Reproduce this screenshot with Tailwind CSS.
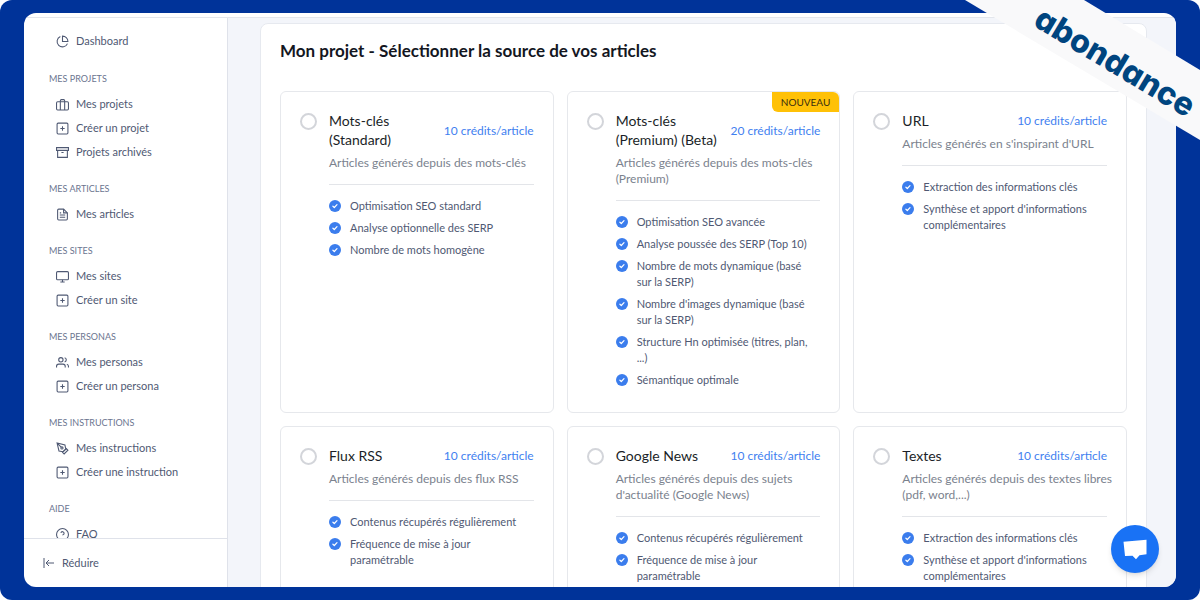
<!DOCTYPE html>
<html lang="fr">
<head>
<meta charset="utf-8">
<meta name="viewport" content="width=device-width, initial-scale=1">
<title>Mon projet - Sélectionner la source de vos articles</title>
<script src="https://cdn.jsdelivr.net/npm/@tailwindcss/browser@4"></script>
</head>
<body class="bg-white font-['Lato','Open_Sans',sans-serif] text-[11px] leading-4 text-[#4f5973]">
<svg class="hidden" aria-hidden="true">
  <symbol id="pie" viewBox="0 0 24 24"><path d="M21.2 15.9A10 10 0 1 1 8 2.8"/><path d="M22 12A10 10 0 0 0 12 2v10z"/></symbol>
  <symbol id="case" viewBox="0 0 24 24"><rect x="1" y="7" width="22" height="15" rx="2"/><path d="M16 22V5a2 2 0 0 0-2-2h-4a2 2 0 0 0-2 2v17"/></symbol>
  <symbol id="plus" viewBox="0 0 24 24"><rect x="2" y="2" width="20" height="20" rx="2"/><path d="M12 8v8M8 12h8"/></symbol>
  <symbol id="archive" viewBox="0 0 24 24"><path d="M21 8v13H3V8"/><path d="M1 3h22v5H1zM10 12h4"/></symbol>
  <symbol id="file" viewBox="0 0 24 24"><path d="M14 2H5a2 2 0 0 0-2 2v16a2 2 0 0 0 2 2h14a2 2 0 0 0 2-2V9z"/><path d="M14 2v7h7M17 13H7M17 17H7M9.500 9H7"/></symbol>
  <symbol id="monitor" viewBox="0 0 24 24"><rect x="1" y="3" width="22" height="15" rx="2"/><path d="M8 22h8M12 18v4"/></symbol>
  <symbol id="users" viewBox="0 0 24 24"><path d="M17 21v-2a4 4 0 0 0-4-4H5a4 4 0 0 0-4 4v2"/><circle cx="9" cy="7" r="4"/><path d="M23 21v-2a4 4 0 0 0-3-3.870M16 3.130a4 4 0 0 1 0 7.750"/></symbol>
  <symbol id="pen" viewBox="0 0 24 24"><path d="M12 19l7-7 3 3-7 7-3-3z"/><path d="M18 13l-1.500-7.500L2 2l3.500 14.500L13 18l5-5zM2 2l7.600 7.600"/><circle cx="11" cy="11" r="2"/></symbol>
  <symbol id="help" viewBox="0 0 24 24"><circle cx="12" cy="12" r="11"/><path d="M9 9a3 3 0 0 1 5.900 1c0 2-3 3-3 3M12 17h.01"/></symbol>
  <symbol id="collapse" viewBox="0 0 24 24"><path d="M2 2v20M22 12H7M12 6l-6 6 6 6"/></symbol>
  <symbol id="check" viewBox="0 0 12 12"><circle cx="6" cy="6" r="6" fill="#3b7ded"/><path d="M3.900 6.200l1.400 1.300 2.700-2.900" fill="none" stroke="#fff" stroke-width="1.200" stroke-linecap="round" stroke-linejoin="round"/></symbol>
</svg>

<div class="relative h-screen overflow-hidden rounded-xl bg-[#003399] px-6 py-[13px]">
  <div class="flex h-full flex-col overflow-hidden rounded-xl bg-white">
    <header class="h-[5px] shrink-0 border-b border-[#e3e6ec]"></header>
    <div class="flex min-h-0 grow">

      <aside class="flex w-[204px] shrink-0 flex-col border-r border-[#dfe2ea]">
        <nav class="min-h-0 grow overflow-hidden px-[25px] pt-[11px] [&_a]:flex [&_a]:h-6 [&_a]:items-center [&_a]:gap-[7px] [&_a]:pl-[7px] [&_a:first-child]:mb-[18px] [&_svg]:size-[13px] [&_svg]:shrink-0 [&_svg]:fill-none [&_svg]:stroke-current [&_svg]:stroke-2 [&_h2]:mt-[17px] [&_h2]:mb-[5px] [&_h2]:text-[9px] [&_h2]:leading-4 [&_h2]:text-[#6b7590]">
          <a href="#"><svg><use href="#pie"/></svg>Dashboard</a>
          <h2>MES PROJETS</h2>
          <a href="#"><svg><use href="#case"/></svg>Mes projets</a>
          <a href="#"><svg><use href="#plus"/></svg>Créer un projet</a>
          <a href="#"><svg><use href="#archive"/></svg>Projets archivés</a>
          <h2>MES ARTICLES</h2>
          <a href="#"><svg><use href="#file"/></svg>Mes articles</a>
          <h2>MES SITES</h2>
          <a href="#"><svg><use href="#monitor"/></svg>Mes sites</a>
          <a href="#"><svg><use href="#plus"/></svg>Créer un site</a>
          <h2>MES PERSONAS</h2>
          <a href="#"><svg><use href="#users"/></svg>Mes personas</a>
          <a href="#"><svg><use href="#plus"/></svg>Créer un persona</a>
          <h2>MES INSTRUCTIONS</h2>
          <a href="#"><svg><use href="#pen"/></svg>Mes instructions</a>
          <a href="#"><svg><use href="#plus"/></svg>Créer une instruction</a>
          <h2>AIDE</h2>
          <a href="#"><svg><use href="#help"/></svg>FAQ</a>
        </nav>
        <button type="button" class="flex h-[49px] shrink-0 items-center gap-[7px] border-t border-[#dfe2ea] px-[19px]"><svg class="size-3 fill-none stroke-current stroke-2"><use href="#collapse"/></svg>Réduire</button>
      </aside>

      <main class="min-w-0 grow overflow-hidden bg-[#f3f5fa] pt-[5px] pr-[29px] pl-8">
        <section class="rounded-lg border border-[#e6e9ef] bg-white px-[19px] pt-[15px] pb-5">
          <h1 class="mb-7 text-[17px] leading-6 font-bold text-[#14171f]">Mon projet - Sélectionner la source de vos articles</h1>
          <div class="grid grid-cols-3 gap-[13px] [&_li]:flex [&_li]:gap-[9px] [&_li_svg]:mt-[2px] [&_li_svg]:size-3 [&_li_svg]:shrink-0 [&_hr]:my-[13px] [&_hr]:border-[#e3e5e9] [&_ul]:space-y-[6px]">

            <label class="relative flex items-start gap-3 rounded-md border border-[#e6e8ec] px-[19px] pt-[19px] pb-6">
              <input type="radio" name="source" class="mt-[2px] size-[17px] shrink-0 appearance-none rounded-full border-2 border-[#d3d5da]">
              <div class="min-w-0 grow">
                <div class="flex items-center justify-between gap-2 leading-[19px]"><h3 class="text-[14px] text-[#1b1f28]">Mots-clés<br>(Standard)</h3><span class="shrink-0 text-[12px] text-[#3f7ff0]">10 crédits/article</span></div>
                <p class="mt-[6px] text-[12px] whitespace-nowrap text-[#7b828e]">Articles générés depuis des mots-clés</p>
                <hr>
                <ul>
                  <li><svg><use href="#check"/></svg>Optimisation SEO standard</li>
                  <li><svg><use href="#check"/></svg>Analyse optionnelle des SERP</li>
                  <li><svg><use href="#check"/></svg>Nombre de mots homogène</li>
                </ul>
              </div>
            </label>

            <label class="relative flex items-start gap-3 rounded-md border border-[#e6e8ec] px-[19px] pt-[19px] pb-6">
              <span class="absolute top-0 right-0 rounded-tr-md rounded-bl-md bg-[#ffc107] px-[9px] text-[10px] leading-5 text-[#3a2e10]">NOUVEAU</span>
              <input type="radio" name="source" class="mt-[2px] size-[17px] shrink-0 appearance-none rounded-full border-2 border-[#d3d5da]">
              <div class="min-w-0 grow">
                <div class="flex items-center justify-between gap-2 leading-[19px]"><h3 class="text-[14px] text-[#1b1f28]">Mots-clés<br>(Premium) (Beta)</h3><span class="shrink-0 text-[12px] text-[#3f7ff0]">20 crédits/article</span></div>
                <p class="mt-[6px] text-[12px] whitespace-nowrap text-[#7b828e]">Articles générés depuis des mots-clés<br>(Premium)</p>
                <hr>
                <ul>
                  <li><svg><use href="#check"/></svg>Optimisation SEO avancée</li>
                  <li><svg><use href="#check"/></svg>Analyse poussée des SERP (Top 10)</li>
                  <li><svg><use href="#check"/></svg><span>Nombre de mots dynamique (basé<br>sur la SERP)</span></li>
                  <li><svg><use href="#check"/></svg><span>Nombre d'images dynamique (basé<br>sur la SERP)</span></li>
                  <li><svg><use href="#check"/></svg><span>Structure Hn optimisée (titres, plan,<br>...)</span></li>
                  <li><svg><use href="#check"/></svg>Sémantique optimale</li>
                </ul>
              </div>
            </label>

            <label class="relative flex items-start gap-3 rounded-md border border-[#e6e8ec] px-[19px] pt-[19px] pb-6">
              <input type="radio" name="source" class="mt-[2px] size-[17px] shrink-0 appearance-none rounded-full border-2 border-[#d3d5da]">
              <div class="min-w-0 grow">
                <div class="flex items-center justify-between gap-2 leading-[19px]"><h3 class="text-[14px] text-[#1b1f28]">URL</h3><span class="shrink-0 text-[12px] text-[#3f7ff0]">10 crédits/article</span></div>
                <p class="mt-[6px] text-[12px] whitespace-nowrap text-[#7b828e]">Articles générés en s'inspirant d'URL</p>
                <hr>
                <ul>
                  <li><svg><use href="#check"/></svg>Extraction des informations clés</li>
                  <li><svg><use href="#check"/></svg><span>Synthèse et apport d'informations<br>complémentaires</span></li>
                </ul>
              </div>
            </label>

            <label class="relative flex items-start gap-3 rounded-md border border-[#e6e8ec] px-[19px] pt-[19px] pb-6">
              <input type="radio" name="source" class="mt-[2px] size-[17px] shrink-0 appearance-none rounded-full border-2 border-[#d3d5da]">
              <div class="min-w-0 grow">
                <div class="flex items-center justify-between gap-2 leading-[19px]"><h3 class="text-[14px] text-[#1b1f28]">Flux RSS</h3><span class="shrink-0 text-[12px] text-[#3f7ff0]">10 crédits/article</span></div>
                <p class="mt-[6px] text-[12px] whitespace-nowrap text-[#7b828e]">Articles générés depuis des flux RSS</p>
                <hr>
                <ul>
                  <li><svg><use href="#check"/></svg>Contenus récupérés régulièrement</li>
                  <li><svg><use href="#check"/></svg><span>Fréquence de mise à jour<br>paramétrable</span></li>
                </ul>
              </div>
            </label>

            <label class="relative flex items-start gap-3 rounded-md border border-[#e6e8ec] px-[19px] pt-[19px] pb-6">
              <input type="radio" name="source" class="mt-[2px] size-[17px] shrink-0 appearance-none rounded-full border-2 border-[#d3d5da]">
              <div class="min-w-0 grow">
                <div class="flex items-center justify-between gap-2 leading-[19px]"><h3 class="text-[14px] text-[#1b1f28]">Google News</h3><span class="shrink-0 text-[12px] text-[#3f7ff0]">10 crédits/article</span></div>
                <p class="mt-[6px] text-[12px] whitespace-nowrap text-[#7b828e]">Articles générés depuis des sujets<br>d'actualité (Google News)</p>
                <hr>
                <ul>
                  <li><svg><use href="#check"/></svg>Contenus récupérés régulièrement</li>
                  <li><svg><use href="#check"/></svg><span>Fréquence de mise à jour<br>paramétrable</span></li>
                </ul>
              </div>
            </label>

            <label class="relative flex items-start gap-3 rounded-md border border-[#e6e8ec] px-[19px] pt-[19px] pb-6">
              <input type="radio" name="source" class="mt-[2px] size-[17px] shrink-0 appearance-none rounded-full border-2 border-[#d3d5da]">
              <div class="min-w-0 grow">
                <div class="flex items-center justify-between gap-2 leading-[19px]"><h3 class="text-[14px] text-[#1b1f28]">Textes</h3><span class="shrink-0 text-[12px] text-[#3f7ff0]">10 crédits/article</span></div>
                <p class="mt-[6px] text-[12px] whitespace-nowrap text-[#7b828e]">Articles générés depuis des textes libres<br>(pdf, word,...)</p>
                <hr>
                <ul>
                  <li><svg><use href="#check"/></svg>Extraction des informations clés</li>
                  <li><svg><use href="#check"/></svg><span>Synthèse et apport d'informations<br>complémentaires</span></li>
                </ul>
              </div>
            </label>
          </div>
        </section>
      </main>
    </div>
  </div>

  <!-- Corner ribbon -->
  <div class="absolute top-0 right-0 h-[140px] w-[235px] bg-[#f9f9fa] [clip-path:polygon(0_0,119px_0,100%_70px,100%_100%)]">
    <span class="absolute top-[62px] left-[150px] -translate-x-1/2 -translate-y-1/2 rotate-31 font-['Inter',sans-serif] text-[32px] leading-10 font-extrabold text-[#00457f] [font-feature-settings:'cv11']">abondance</span>
  </div>

  <button type="button" aria-label="Ouvrir le chat" class="absolute right-[41px] bottom-[27px] size-12 rounded-full bg-[#1972f5] shadow-md">
    <svg viewBox="0 0 48 48" class="size-12"><path d="M12.500 16.800L35.500 14.700V29.300L28.500 30.300L25 34.300L21.500 30.700L14 31z" fill="#fff"/></svg>
  </button>
</div>
</body>
</html>
